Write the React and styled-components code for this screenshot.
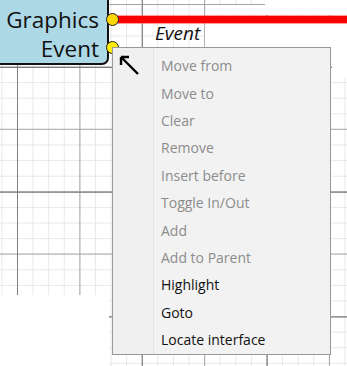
import React from "react";
import styled, { createGlobalStyle } from "styled-components";

const GlobalStyle = createGlobalStyle`
  html, body {
    margin: 0;
    padding: 0;
    background: #fff;
    overflow: hidden;
  }
`;

const Canvas = styled.div`
  position: relative;
  width: 347px;
  height: 366px;
  overflow: hidden;
  font-family: "Open Sans", "Noto Sans", sans-serif;
  background-color: #fff;
  background-image:
    linear-gradient(to right, #808080 1px, transparent 1px),
    linear-gradient(to bottom, #808080 1px, transparent 1px),
    linear-gradient(to right, #a6a6a6 1px, transparent 1px),
    linear-gradient(to bottom, #a6a6a6 1px, transparent 1px),
    linear-gradient(to right, #e8e8e8 1px, transparent 1px),
    linear-gradient(to bottom, #e8e8e8 1px, transparent 1px);
  background-size:
    124.8px 100%,
    100% 124.8px,
    62.4px 100%,
    100% 62.4px,
    15.6px 100%,
    100% 15.6px;
  background-position:
    17px 0,
    0 67px,
    17px 0,
    0 4px,
    1.4px 0,
    0 4.2px;
`;

/* patches of the canvas that were left unpainted */
const Blank = styled.div`
  position: absolute;
  background: #fff;
  left: ${(p) => p.$x}px;
  top: ${(p) => p.$y}px;
  width: ${(p) => p.$w}px;
  height: ${(p) => p.$h}px;
`;

const Node = styled.div`
  position: absolute;
  left: -20px;
  top: -20px;
  width: 117px;
  height: 81px;
  background: #add8e6;
  border: 2px solid #111;
  border-radius: 0 0 7px 0;
  display: flex;
  flex-direction: column;
  align-items: flex-end;
  justify-content: flex-end;
  padding-right: 8px;
`;

const PortLabel = styled.div`
  font-size: 22.5px;
  line-height: 29px;
  color: #111;
`;

const Port = styled.div`
  position: absolute;
  width: 11px;
  height: 11px;
  border-radius: 50%;
  border: 1.5px solid #222;
  background: ${(p) => p.$fill};
  left: ${(p) => p.$x - 7}px;
  top: ${(p) => p.$y - 7}px;
`;

const Wire = styled.div`
  position: absolute;
  left: 118px;
  right: 0;
  top: 15.5px;
  height: 7px;
  background: #ff0000;
  box-shadow: 0 0 0.6px 0.6px rgba(255, 90, 90, 0.6);
`;

const WireLabel = styled.div`
  position: absolute;
  left: 155px;
  top: 21px;
  font-size: 19px;
  font-style: italic;
  color: #111;
  line-height: 24px;
`;

const Menu = styled.div`
  position: absolute;
  left: 112px;
  top: 47px;
  width: 219px;
  height: 308px;
  display: flex;
  flex-direction: column;
  background: linear-gradient(to right, #f0f0f0 40px, #e3e3e3 40px, #e3e3e3 41px, #f2f2f2 41px);
  border: 1px solid #999;
  padding-top: 4px;
  box-sizing: border-box;

  &::after {
    content: "";
    position: absolute;
    left: 8px;
    right: -1px;
    top: 31px;
    bottom: -1px;
    box-shadow: 4px 5px 3px rgba(0, 0, 0, 0.35);
    z-index: -1;
  }
`;

const Item = styled.div`
  height: 27.4px;
  display: flex;
  align-items: center;
  padding-left: 48px;
  font-size: 14px;
  color: ${(p) => (p.$disabled ? "#8c8c8c" : "#111")};
  white-space: nowrap;
`;

const Cursor = styled.svg`
  position: absolute;
  left: 117px;
  top: 53px;
`;

const items = [
  ["Move from", true],
  ["Move to", true],
  ["Clear", true],
  ["Remove", true],
  ["Insert before", true],
  ["Toggle In/Out", true],
  ["Add", true],
  ["Add to Parent", true],
  ["Highlight", false],
  ["Goto", false],
  ["Locate interface", false],
];

export default function App() {
  return (
    <Canvas>
      <GlobalStyle />
      <Blank $x={265} $y={0} $w={82} $h={15} />
      <Blank $x={206} $y={5} $w={141} $h={10} />
      <Blank $x={205} $y={23} $w={142} $h={24} />
      <Blank $x={332} $y={47} $w={15} $h={31} />
      <Blank $x={0} $y={295} $w={109} $h={71} />
      <Wire />
      <WireLabel>Event</WireLabel>
      <Node>
        <PortLabel>Graphics</PortLabel>
        <PortLabel>Event</PortLabel>
      </Node>
      <Port $x={113} $y={20} $fill="#ffd700" />
      <Port $x={113} $y={48} $fill="#ffee00" />
      <Menu>
        {items.map(([label, disabled]) => (
          <Item key={label} $disabled={disabled}>
            {label}
          </Item>
        ))}
      </Menu>
      <Cursor width="26" height="26" viewBox="0 0 26 26">
        <path d="M4 4 L21 21 M4 4 L12 4 M4 4 L4 12" stroke="#000" strokeWidth="2.4" fill="none" />
      </Cursor>
    </Canvas>
  );
}
